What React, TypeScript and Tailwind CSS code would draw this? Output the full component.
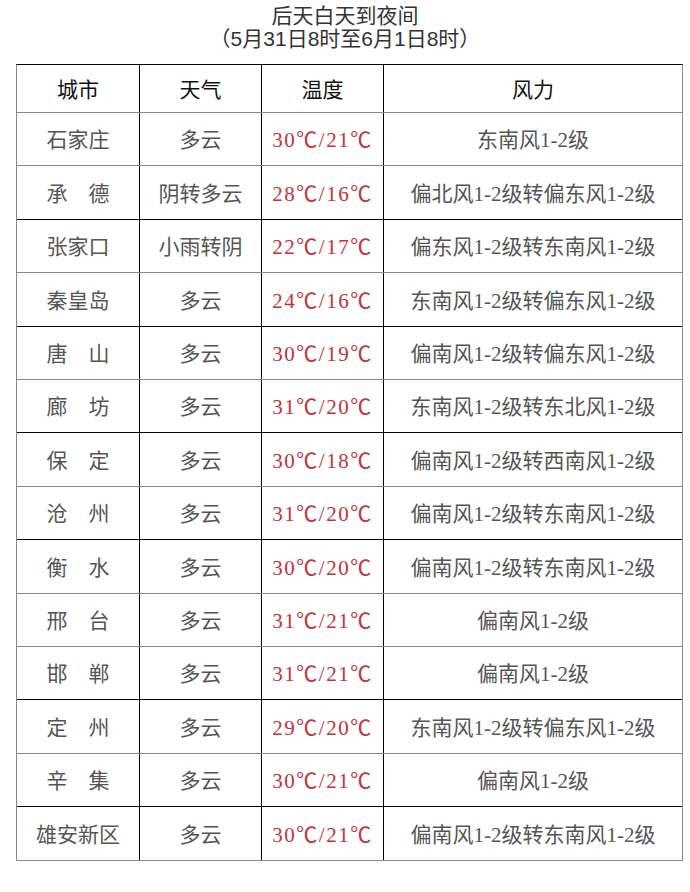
const rows = [
  { city: '石家庄', weather: '多云', temp: '30℃/21℃', wind: '东南风1-2级', dark: false },
  { city: '承　德', weather: '阴转多云', temp: '28℃/16℃', wind: '偏北风1-2级转偏东风1-2级', dark: true },
  { city: '张家口', weather: '小雨转阴', temp: '22℃/17℃', wind: '偏东风1-2级转东南风1-2级', dark: false },
  { city: '秦皇岛', weather: '多云', temp: '24℃/16℃', wind: '东南风1-2级转偏东风1-2级', dark: true },
  { city: '唐　山', weather: '多云', temp: '30℃/19℃', wind: '偏南风1-2级转偏东风1-2级', dark: false },
  { city: '廊　坊', weather: '多云', temp: '31℃/20℃', wind: '东南风1-2级转东北风1-2级', dark: true },
  { city: '保　定', weather: '多云', temp: '30℃/18℃', wind: '偏南风1-2级转西南风1-2级', dark: false },
  { city: '沧　州', weather: '多云', temp: '31℃/20℃', wind: '偏南风1-2级转东南风1-2级', dark: true },
  { city: '衡　水', weather: '多云', temp: '30℃/20℃', wind: '偏南风1-2级转东南风1-2级', dark: false },
  { city: '邢　台', weather: '多云', temp: '31℃/21℃', wind: '偏南风1-2级', dark: false },
  { city: '邯　郸', weather: '多云', temp: '31℃/21℃', wind: '偏南风1-2级', dark: true },
  { city: '定　州', weather: '多云', temp: '29℃/20℃', wind: '东南风1-2级转偏东风1-2级', dark: false },
  { city: '辛　集', weather: '多云', temp: '30℃/21℃', wind: '偏南风1-2级', dark: true },
  { city: '雄安新区', weather: '多云', temp: '30℃/21℃', wind: '偏南风1-2级转东南风1-2级', dark: false },
]

const cell = 'flex items-center justify-center border-r border-black pt-[4px]'

export default function App() {
  return (
    <div className="h-[892px] w-[690px] bg-white font-['Liberation_Serif','Noto_Sans_CJK_SC',serif] text-[21px]">
      <div className="pt-[4px] text-center font-['Liberation_Sans','Noto_Sans_CJK_SC',sans-serif] leading-[23px] text-[#333]">
        <p>后天白天到夜间</p>
        <p>（5月31日8时至6月1日8时）</p>
      </div>

      <div className="ml-[16px] mt-[14px] w-[667px] border-x border-b border-t border-x-[#888] border-b-[#888] border-t-black">
        <div className="grid h-[48px] grid-cols-[123px_122px_122px_1fr] border-b border-[#888] text-[#111]">
          <div className={cell}>城市</div>
          <div className={cell}>天气</div>
          <div className={cell}>温度</div>
          <div className="flex items-center justify-center pt-[4px]">风力</div>
        </div>
        {rows.map((r, i) => (
          <div
            key={r.city}
            className={
              'grid h-[53.4px] grid-cols-[123px_122px_122px_1fr] text-[#555] ' +
              (i === rows.length - 1 ? '' : r.dark ? 'border-b border-black' : 'border-b border-[#888]')
            }
          >
            <div className={cell}>{r.city}</div>
            <div className={cell}>{r.weather}</div>
            <div className={cell + ' tracking-[1.5px] text-[#c3323a]'}>{r.temp}</div>
            <div className="flex items-center justify-center pt-[4px]">{r.wind}</div>
          </div>
        ))}
      </div>
    </div>
  )
}
